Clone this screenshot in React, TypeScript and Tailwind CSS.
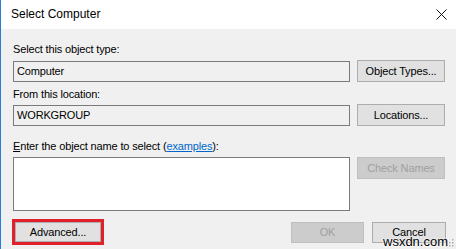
export default function App() {
  const btn =
    "flex items-center justify-center border border-[#adadad] bg-[#e1e1e1] text-black";
  const btnOff =
    "flex items-center justify-center border border-[#bfbfbf] bg-[#cccccc] text-[#a0a0a0]";

  return (
    <div className="relative flex h-[249px] w-[456px] flex-col overflow-hidden border-l border-[#2b7ad4] bg-[#f0f0f0] font-['Liberation_Sans',Arial,sans-serif] text-[11px] leading-[15px] tracking-[-0.15px] text-black">
      {/* title bar */}
      <div className="flex h-[29px] items-center justify-between bg-white pl-[10px] pr-[9px]">
        <span className="text-[12px] tracking-normal">Select Computer</span>
        <svg width="11" height="11" viewBox="0 0 11 11">
          <path d="M0.5 0.5 L10.5 10.5 M10.5 0.5 L0.5 10.5" stroke="#111" strokeWidth="1" />
        </svg>
      </div>

      <div className="flex flex-col pl-[12px] pr-[10px]">
        <div className="mt-[13px]">Select this object type:</div>
        <div className="mt-[3px] flex items-center gap-[7px]">
          <div className="flex h-[21px] w-[337px] items-center border border-[#7a7a7a] bg-[#f0f0f0] pl-[3px]">
            Computer
          </div>
          <div className={`${btn} h-[22px] w-[88px]`}>Object Types...</div>
        </div>

        <div className="mt-[5px]">From this location:</div>
        <div className="mt-[2px] flex items-center gap-[7px]">
          <div className="flex h-[21px] w-[337px] items-center border border-[#7a7a7a] bg-[#f0f0f0] pl-[3px]">
            WORKGROUP
          </div>
          <div className={`${btn} h-[22px] w-[88px]`}>Locations...</div>
        </div>

        <div className="mt-[13px]">
          <span className="underline">E</span>nter the object name to select (
          <span className="text-[#0066cc] underline">examples</span>):
        </div>
        <div className="mt-[3px] flex items-start gap-[7px]">
          <div className="h-[54px] w-[337px] border border-[#7a7a7a] bg-white" />
          <div className={`${btnOff} h-[22px] w-[88px]`}>Check Names</div>
        </div>

        <div className="mt-[8px] flex items-center">
          <div className="-ml-[1px] flex h-[26px] w-[92px] items-center justify-center border-[3px] border-[#e0202a]">
            <div className={`${btn} h-[20px] w-[86px]`}>Advanced...</div>
          </div>
          <div className="flex-1" />
          <div className={`${btnOff} h-[21px] w-[73px]`}>OK</div>
          <div className={`${btn} ml-[8px] h-[21px] w-[74px] items-start pt-[2px]`}>Cancel</div>
        </div>
      </div>

      {/* size grip */}
      <svg width="8" height="8" viewBox="0 0 8 8" className="absolute bottom-[2px] right-[2px]">
        <rect x="6" y="0" width="1.5" height="1.5" fill="#b0b0b0" />
        <rect x="3" y="3" width="1.5" height="1.5" fill="#b0b0b0" />
        <rect x="6" y="3" width="1.5" height="1.5" fill="#b0b0b0" />
        <rect x="0" y="6" width="1.5" height="1.5" fill="#b0b0b0" />
        <rect x="3" y="6" width="1.5" height="1.5" fill="#b0b0b0" />
        <rect x="6" y="6" width="1.5" height="1.5" fill="#b0b0b0" />
      </svg>

      {/* watermark */}
      <span className="absolute left-[382px] top-[235px] text-[13px] leading-[13px] tracking-normal text-black [text-shadow:0_0_2px_#fff,0_0_2px_#fff]">
        wsxdn.com
      </span>
    </div>
  );
}
